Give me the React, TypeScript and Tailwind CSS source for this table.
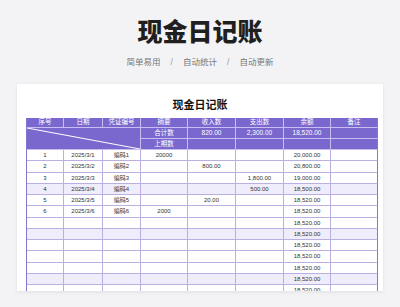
import React from 'react';

const font = { fontFamily: '"Liberation Sans", "Noto Sans CJK SC", sans-serif' };

const heads = ['序号', '日期', '凭证编号', '摘要', '收入数', '支出数', '余额', '备注'];

// 流水数据
const rows: string[][] = [
  ['1', '2025/3/1', '编码1', '20000', '', '', '20,000.00', ''],
  ['2', '2025/3/2', '编码2', '', '800.00', '', '20,800.00', ''],
  ['3', '2025/3/3', '编码3', '', '', '1,800.00', '19,000.00', ''],
  ['4', '2025/3/4', '编码4', '', '', '500.00', '18,500.00', ''],
  ['5', '2025/3/5', '编码5', '', '20.00', '', '18,520.00', ''],
  ['6', '2025/3/6', '编码6', '2000', '', '', '18,520.00', ''],
  ...Array.from({ length: 7 }, () => ['', '', '', '', '', '', '18,520.00', '']),
];

const headCell = 'flex items-center justify-center border-r border-b border-[#c7bdf0] bg-[#7a68cf] text-white text-[6.5px] leading-none';

export default function App() {
  return (
    <div className="w-[400px] h-[307px] overflow-hidden bg-[#f3f3f6] flex flex-col" style={font}>
      {/* Header */}
      <h1 className="pt-[17px] text-[25px] leading-[30px] font-black text-center text-[#1f1f1f]">现金日记账</h1>
      <div className="mt-[9px] flex justify-center items-center text-[8.5px] leading-[12px] text-[#777]">
        <span>简单易用</span>
        <span className="mx-[10px] text-[#999]">/</span>
        <span>自动统计</span>
        <span className="mx-[10px] text-[#999]">/</span>
        <span>自动更新</span>
      </div>

      {/* Sheet card */}
      <div className="shrink-0 mt-[16px] ml-[17px] w-[366px] h-[207px] overflow-hidden bg-white shadow-[0_1px_4px_rgba(0,0,0,0.08)]">
        <div className="pt-[14px] text-center text-[11px] leading-[14px] font-bold text-[#111]">现金日记账</div>
        <div className="mt-[6px] ml-[9px] w-[351px] grid grid-cols-[37px_39px_38px_47px_48px_48px_47px_47px] grid-rows-[10px_11px_11px] auto-rows-[11.25px] border-l border-[#8576cf]">
          {heads.map((h, i) => (
            <div key={h} className={`${headCell} ${i === 7 ? 'border-r-[#8576cf]' : ''}`}>{h}</div>
          ))}

          {/* merged corner with diagonal */}
          <div className="relative col-span-3 row-span-2 border-r border-b border-[#c7bdf0] bg-[#7a68cf]">
            <svg className="absolute inset-0 w-full h-full" preserveAspectRatio="none" viewBox="0 0 100 100">
              <line x1="0" y1="0" x2="100" y2="100" stroke="#fff" strokeWidth="1" vectorEffect="non-scaling-stroke" />
            </svg>
          </div>
          <div className={headCell}>合计数</div>
          <div className={headCell}>820.00</div>
          <div className={headCell}>2,300.00</div>
          <div className={headCell}>18,520.00</div>
          <div className={`${headCell} border-r-[#8576cf]`}></div>
          <div className={headCell}>上期数</div>
          <div className={headCell}></div>
          <div className={headCell}></div>
          <div className={headCell}></div>
          <div className={`${headCell} border-r-[#8576cf]`}></div>

          {rows.map((r, ri) =>
            r.map((c, ci) => (
              <div
                key={`${ri}-${ci}`}
                className={`flex items-center justify-center border-b border-r text-[6px] leading-none text-[#333] ${
                  ci === 7 ? 'border-r-[#8576cf]' : 'border-r-[#b9afe0]'
                } border-b-[#b9afe0] ${ri % 4 === 3 ? 'bg-[#efecfb]' : 'bg-white'}`}
              >
                {c}
              </div>
            ))
          )}
        </div>
      </div>
    </div>
  );
}
